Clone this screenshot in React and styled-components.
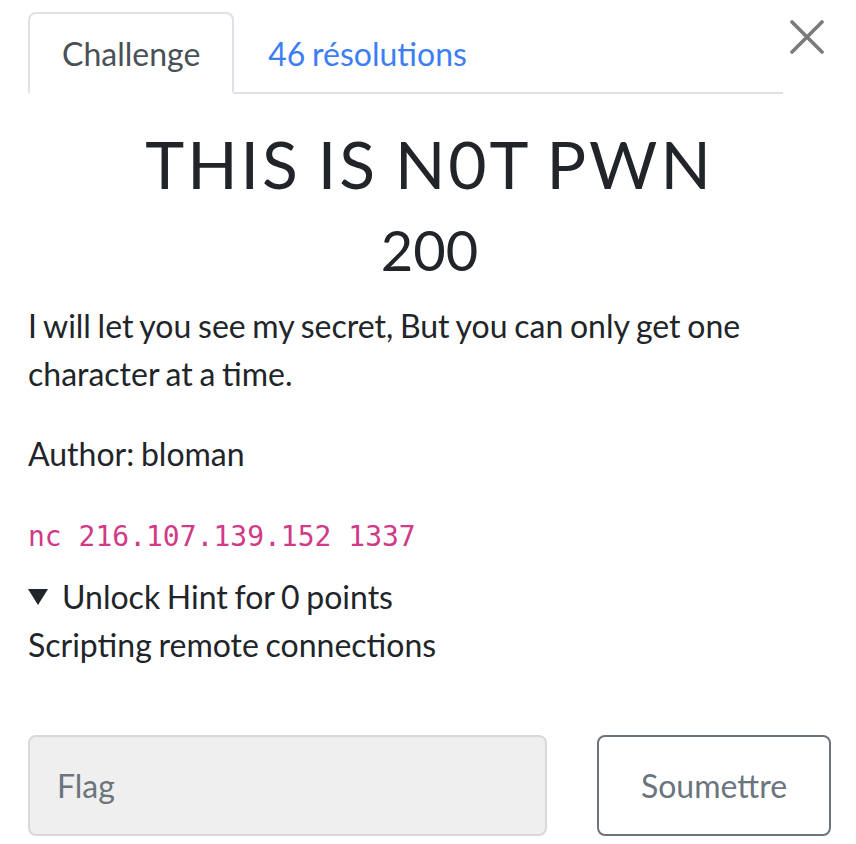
import React from "react";
import styled, { createGlobalStyle } from "styled-components";

const GlobalStyle = createGlobalStyle`
  html, body {
    margin: 0;
    padding: 0;
    background: #ffffff;
  }
  body {
    font-family: Lato, "Noto Sans", "Liberation Sans", sans-serif;
    color: #212529;
    word-spacing: -1.5px;
  }
`;

const Page = styled.div`
  width: 856px;
  box-sizing: border-box;
  padding: 12px 25px 0 28px;
`;

const Header = styled.div`
  display: flex;
  align-items: stretch;
`;

const Tabs = styled.div`
  flex: 1;
  display: flex;
  border-bottom: 2px solid #dee2e6;
`;

const Tab = styled.div`
  box-sizing: border-box;
  height: 82px;
  margin-bottom: -2px;
  padding: 0 32px;
  display: flex;
  align-items: center;
  font-size: 32px;
  border: 2px solid ${p => (p.active ? "#dee2e6" : "transparent")};
  border-bottom-color: ${p => (p.active ? "#ffffff" : "transparent")};
  border-radius: 8px 8px 0 0;
  background: ${p => (p.active ? "#ffffff" : "transparent")};
  color: ${p => (p.active ? "#495057" : "#3d7ef5")};
`;

const CloseButton = styled.div`
  width: 48px;
  display: flex;
  justify-content: center;
  padding-top: 8px;
  color: #7a7a7a;
`;

const Title = styled.h3`
  margin: 30px 0 0;
  font-size: 66px;
  font-weight: 400;
  line-height: 1.2;
  letter-spacing: 3px;
  word-spacing: -3px;
  text-align: center;
`;

const Value = styled.h4`
  margin: 13px 0 0;
  font-size: 56px;
  font-weight: 400;
  line-height: 1.2;
  text-align: center;
`;

const Text = styled.p`
  margin: ${p => p.top || 0}px 0 0;
  font-size: 32px;
  line-height: 48px;
`;

const Code = styled.code`
  font-family: "DejaVu Sans Mono", "Liberation Mono", monospace;
  font-size: 28px;
  word-spacing: 0;
  color: #d03a87;
`;

const Summary = styled.div`
  margin-top: 12px;
  display: flex;
  align-items: center;
  gap: 14px;
  font-size: 32px;
  line-height: 48px;
`;

const FormRow = styled.div`
  margin-top: 66px;
  display: grid;
  grid-template-columns: 519px 234px;
  column-gap: 50px;
`;

const FlagInput = styled.input`
  box-sizing: border-box;
  height: 101px;
  padding: 0 27px;
  border: 2px solid #d6d9dc;
  border-radius: 8px;
  background: #efefef;
  font-family: Lato, "Noto Sans", sans-serif;
  font-size: 32px;
  color: #495057;
  outline: none;

  &::placeholder {
    color: #6c757d;
  }
`;

const SubmitButton = styled.button`
  box-sizing: border-box;
  height: 101px;
  border: 2px solid #6c757d;
  border-radius: 8px;
  background: #ffffff;
  font-family: Lato, "Noto Sans", sans-serif;
  font-size: 32px;
  color: #6c757d;
`;

const CloseIcon = () => (
  <svg width="34" height="34" viewBox="0 0 34 34">
    <path
      d="M2 2 L32 32 M32 2 L2 32"
      stroke="currentColor"
      strokeWidth="3.6"
      strokeLinecap="round"
      fill="none"
    />
  </svg>
);

const Caret = () => (
  <svg width="20" height="16" viewBox="0 0 20 16">
    <path d="M0 0 L20 0 L10 16 Z" fill="#212529" />
  </svg>
);

export default function App() {
  return (
    <Page>
      <GlobalStyle />
      <Header>
        <Tabs>
          <Tab active>Challenge</Tab>
          <Tab>46 résolutions</Tab>
        </Tabs>
        <CloseButton>
          <CloseIcon />
        </CloseButton>
      </Header>
      <Title>THIS IS N0T PWN</Title>
      <Value>200</Value>
      <Text top={19}>
        I will let you see my secret, But you can only get one character at a
        time.
      </Text>
      <Text top={32}>Author: bloman</Text>
      <Text top={32}>
        <Code>nc 216.107.139.152 1337</Code>
      </Text>
      <Summary>
        <Caret />
        Unlock Hint for 0 points
      </Summary>
      <Text>Scripting remote connections</Text>
      <FormRow>
        <FlagInput placeholder="Flag" />
        <SubmitButton>Soumettre</SubmitButton>
      </FormRow>
    </Page>
  );
}
